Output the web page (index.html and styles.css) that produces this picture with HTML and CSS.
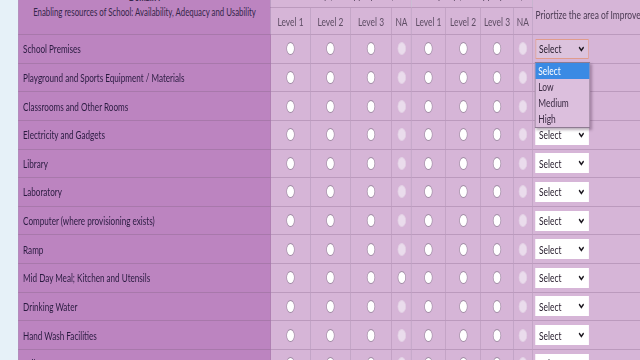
FILE: index.html
```html
<!DOCTYPE html>
<html lang="en">
<head>
	<meta charset="UTF-8">
	<title>School Self Evaluation</title>
	<link rel="stylesheet" href="styles.css">
</head>
<body>
	<div class="page">
		<table class="grid">
			<colgroup>
				<col class="c-label">
				<col class="c-a"><col class="c-a"><col class="c-a3"><col class="c-na">
				<col class="c-b1"><col class="c-b2"><col class="c-b3"><col class="c-na2">
				<col class="c-pick">
			</colgroup>
			<thead>
				<tr class="top">
					<th class="label head" rowspan="2"><b>Domain I</b><br>Enabling resources of School: Availability, Adequacy and Usability</th>
					<th colspan="4">Availability (Tick appropriate)</th>
					<th colspan="4">Adequacy (Tick appropriate)</th>
					<th class="prio" rowspan="2">Priortize the area of Improvement</th>
				</tr>
				<tr class="lvl">
					<th>Level 1</th><th>Level 2</th><th>Level 3</th><th>NA</th>
					<th>Level 1</th><th>Level 2</th><th>Level 3</th><th>NA</th>
				</tr>
			</thead>
			<tbody>
				<tr>
					<td class="label">School Premises</td>
					<td><input type="radio" name="r1a"></td><td><input type="radio" name="r1a"></td><td><input type="radio" name="r1a"></td><td><input type="radio" name="r1a" disabled></td>
					<td><input type="radio" name="r1b"></td><td><input type="radio" name="r1b"></td><td><input type="radio" name="r1b"></td><td><input type="radio" name="r1b" disabled></td>
					<td>
						<div class="pick open">
							<select><option>Select</option><option>Low</option><option>Medium</option><option>High</option></select>
							<svg class="chev" viewBox="0 0 10 7"><polyline points="1.2,1.2 5,5.2 8.8,1.2"/></svg>
							<ul class="menu">
								<li class="on">Select</li>
								<li>Low</li>
								<li>Medium</li>
								<li>High</li>
							</ul>
						</div>
					</td>
				</tr>
				<tr>
					<td class="label">Playground and Sports Equipment / Materials</td>
					<td><input type="radio" name="r2a"></td><td><input type="radio" name="r2a"></td><td><input type="radio" name="r2a"></td><td><input type="radio" name="r2a" disabled></td>
					<td><input type="radio" name="r2b"></td><td><input type="radio" name="r2b"></td><td><input type="radio" name="r2b"></td><td><input type="radio" name="r2b" disabled></td>
					<td><div class="pick"><select><option>Select</option><option>Low</option><option>Medium</option><option>High</option></select><svg class="chev" viewBox="0 0 10 7"><polyline points="1.2,1.2 5,5.2 8.8,1.2"/></svg></div></td>
				</tr>
				<tr>
					<td class="label">Classrooms and Other Rooms</td>
					<td><input type="radio" name="r3a"></td><td><input type="radio" name="r3a"></td><td><input type="radio" name="r3a"></td><td><input type="radio" name="r3a" disabled></td>
					<td><input type="radio" name="r3b"></td><td><input type="radio" name="r3b"></td><td><input type="radio" name="r3b"></td><td><input type="radio" name="r3b" disabled></td>
					<td><div class="pick"><select><option>Select</option><option>Low</option><option>Medium</option><option>High</option></select><svg class="chev" viewBox="0 0 10 7"><polyline points="1.2,1.2 5,5.2 8.8,1.2"/></svg></div></td>
				</tr>
				<tr>
					<td class="label">Electricity and Gadgets</td>
					<td><input type="radio" name="r4a"></td><td><input type="radio" name="r4a"></td><td><input type="radio" name="r4a"></td><td><input type="radio" name="r4a" disabled></td>
					<td><input type="radio" name="r4b"></td><td><input type="radio" name="r4b"></td><td><input type="radio" name="r4b"></td><td><input type="radio" name="r4b" disabled></td>
					<td><div class="pick"><select><option>Select</option><option>Low</option><option>Medium</option><option>High</option></select><svg class="chev" viewBox="0 0 10 7"><polyline points="1.2,1.2 5,5.2 8.8,1.2"/></svg></div></td>
				</tr>
				<tr>
					<td class="label">Library</td>
					<td><input type="radio" name="r5a"></td><td><input type="radio" name="r5a"></td><td><input type="radio" name="r5a"></td><td><input type="radio" name="r5a" disabled></td>
					<td><input type="radio" name="r5b"></td><td><input type="radio" name="r5b"></td><td><input type="radio" name="r5b"></td><td><input type="radio" name="r5b" disabled></td>
					<td><div class="pick"><select><option>Select</option><option>Low</option><option>Medium</option><option>High</option></select><svg class="chev" viewBox="0 0 10 7"><polyline points="1.2,1.2 5,5.2 8.8,1.2"/></svg></div></td>
				</tr>
				<tr>
					<td class="label">Laboratory</td>
					<td><input type="radio" name="r6a"></td><td><input type="radio" name="r6a"></td><td><input type="radio" name="r6a"></td><td><input type="radio" name="r6a" disabled></td>
					<td><input type="radio" name="r6b"></td><td><input type="radio" name="r6b"></td><td><input type="radio" name="r6b"></td><td><input type="radio" name="r6b" disabled></td>
					<td><div class="pick"><select><option>Select</option><option>Low</option><option>Medium</option><option>High</option></select><svg class="chev" viewBox="0 0 10 7"><polyline points="1.2,1.2 5,5.2 8.8,1.2"/></svg></div></td>
				</tr>
				<tr>
					<td class="label">Computer (where provisioning exists)</td>
					<td><input type="radio" name="r7a"></td><td><input type="radio" name="r7a"></td><td><input type="radio" name="r7a"></td><td><input type="radio" name="r7a" disabled></td>
					<td><input type="radio" name="r7b"></td><td><input type="radio" name="r7b"></td><td><input type="radio" name="r7b"></td><td><input type="radio" name="r7b" disabled></td>
					<td><div class="pick"><select><option>Select</option><option>Low</option><option>Medium</option><option>High</option></select><svg class="chev" viewBox="0 0 10 7"><polyline points="1.2,1.2 5,5.2 8.8,1.2"/></svg></div></td>
				</tr>
				<tr>
					<td class="label">Ramp</td>
					<td><input type="radio" name="r8a"></td><td><input type="radio" name="r8a"></td><td><input type="radio" name="r8a"></td><td><input type="radio" name="r8a" disabled></td>
					<td><input type="radio" name="r8b"></td><td><input type="radio" name="r8b"></td><td><input type="radio" name="r8b"></td><td><input type="radio" name="r8b" disabled></td>
					<td><div class="pick"><select><option>Select</option><option>Low</option><option>Medium</option><option>High</option></select><svg class="chev" viewBox="0 0 10 7"><polyline points="1.2,1.2 5,5.2 8.8,1.2"/></svg></div></td>
				</tr>
				<tr>
					<td class="label">Mid Day Meal; Kitchen and Utensils</td>
					<td><input type="radio" name="r9a"></td><td><input type="radio" name="r9a"></td><td><input type="radio" name="r9a"></td><td><input type="radio" name="r9a"></td>
					<td><input type="radio" name="r9b"></td><td><input type="radio" name="r9b"></td><td><input type="radio" name="r9b"></td><td><input type="radio" name="r9b" disabled></td>
					<td><div class="pick"><select><option>Select</option><option>Low</option><option>Medium</option><option>High</option></select><svg class="chev" viewBox="0 0 10 7"><polyline points="1.2,1.2 5,5.2 8.8,1.2"/></svg></div></td>
				</tr>
				<tr>
					<td class="label">Drinking Water</td>
					<td><input type="radio" name="r10a"></td><td><input type="radio" name="r10a"></td><td><input type="radio" name="r10a"></td><td><input type="radio" name="r10a" disabled></td>
					<td><input type="radio" name="r10b"></td><td><input type="radio" name="r10b"></td><td><input type="radio" name="r10b"></td><td><input type="radio" name="r10b" disabled></td>
					<td><div class="pick"><select><option>Select</option><option>Low</option><option>Medium</option><option>High</option></select><svg class="chev" viewBox="0 0 10 7"><polyline points="1.2,1.2 5,5.2 8.8,1.2"/></svg></div></td>
				</tr>
				<tr>
					<td class="label">Hand Wash Facilities</td>
					<td><input type="radio" name="r11a"></td><td><input type="radio" name="r11a"></td><td><input type="radio" name="r11a"></td><td><input type="radio" name="r11a" disabled></td>
					<td><input type="radio" name="r11b"></td><td><input type="radio" name="r11b"></td><td><input type="radio" name="r11b"></td><td><input type="radio" name="r11b" disabled></td>
					<td><div class="pick"><select><option>Select</option><option>Low</option><option>Medium</option><option>High</option></select><svg class="chev" viewBox="0 0 10 7"><polyline points="1.2,1.2 5,5.2 8.8,1.2"/></svg></div></td>
				</tr>
				<tr>
					<td class="label">Toilets</td>
					<td><input type="radio" name="r12a"></td><td><input type="radio" name="r12a"></td><td><input type="radio" name="r12a"></td><td><input type="radio" name="r12a" disabled></td>
					<td><input type="radio" name="r12b"></td><td><input type="radio" name="r12b"></td><td><input type="radio" name="r12b"></td><td><input type="radio" name="r12b" disabled></td>
					<td><div class="pick"><select><option>Select</option><option>Low</option><option>Medium</option><option>High</option></select><svg class="chev" viewBox="0 0 10 7"><polyline points="1.2,1.2 5,5.2 8.8,1.2"/></svg></div></td>
				</tr>
			</tbody>
		</table>
	</div>
</body>
</html>
```

FILE: styles.css
```css
html, body{
	margin: 0;
	height: 100%;
	overflow: hidden;
}
body{
	background: #e6f1f8;
	font-family: Lato, "Open Sans", sans-serif;
}

/* the capture is squeezed sideways, so the page is laid out wide and squeezed back */
.page{
	width: 914px;
	padding-left: 26px;
	box-sizing: border-box;
	transform: scaleX(0.7);
	transform-origin: 0 0;
}

.grid{
	border-collapse: collapse;
	table-layout: fixed;
	width: 954px;
	margin-top: -21px;
}
.c-label{ width: 360px; }
.c-a{ width: 57px; }
.c-a3{ width: 59px; }
.c-na{ width: 28px; }
.c-b1{ width: 49px; }
.c-b2{ width: 50px; }
.c-b3{ width: 47px; }
.c-na2{ width: 27px; }
.c-pick{ width: 220px; }

.grid th, .grid td{
	border: 1px solid #bb9abd;
	background: #d6b5d7;
	padding: 0;
	font-weight: normal;
	text-align: center;
	vertical-align: middle;
}

.top th{
	height: 28px;
	box-sizing: border-box;
	color: #4a3a52;
	font-size: 12px;
	line-height: 14px;
	vertical-align: top;
	padding-top: 8px;
	white-space: nowrap;
	overflow: hidden;
}
.lvl th{
	height: 26px;
	color: #5e4d64;
	font-size: 12px;
}

.grid .label{
	background: #bc84c0;
	border-color: #a878ab;
	border-left-color: #9e68a4;
	color: #2a1b40;
	font-size: 11.6px;
	text-align: left;
	padding-left: 6px;
	white-space: nowrap;
}
.grid th.head{
	text-align: center;
	vertical-align: top;
	padding: 9px 0 0;
	font-size: 11.2px;
	line-height: 15px;
	color: #35264a;
}
.grid th.prio{
	text-align: left;
	vertical-align: top;
	padding: 28px 0 0 4px;
	color: #4a3a52;
	font-size: 12px;
	white-space: nowrap;
}

tbody tr{
	height: 28.64px;
}

input[type=radio]{
	appearance: none;
	display: block;
	width: 12px;
	height: 13px;
	margin: 0 auto;
	border: 1px solid #a08ba4;
	border-radius: 50%;
	background: #fff;
}
input[type=radio]:disabled{
	background: #eadcec;
	border-color: #e2d0e4;
}

.pick{
	position: relative;
	width: 76px;
	height: 20px;
	margin-left: 4px;
}
.pick select{
	appearance: none;
	display: block;
	width: 100%;
	height: 20px;
	margin: 0;
	padding: 0 0 0 4px;
	border: 1px solid #fff;
	border-radius: 0;
	background: #fff;
	color: #2a2030;
	font-family: inherit;
	font-size: 12px;
}
.chev{
	position: absolute;
	right: 6px;
	top: 7px;
	width: 9px;
	height: 6px;
	fill: none;
	stroke: #1e1a22;
	stroke-width: 2.2;
	pointer-events: none;
}

.pick.open{
	z-index: 5;
}
.pick.open select{
	background: #dcc3dd;
	border-color: #e09c8c;
}
.menu{
	position: absolute;
	top: 23px;
	left: -1px;
	width: 77px;
	margin: 0;
	padding: 0;
	list-style: none;
	background: #dcbfdd;
	border: 1px solid #8e7b92;
	box-shadow: 2px 2px 3px rgba(60, 30, 60, 0.35);
	font-size: 12px;
	color: #3a2a42;
	text-align: left;
}
.menu li{
	height: 16px;
	line-height: 16px;
	padding-left: 4px;
}
.menu li.on{
	background: #3a8ae4;
	color: #fff;
}
```
